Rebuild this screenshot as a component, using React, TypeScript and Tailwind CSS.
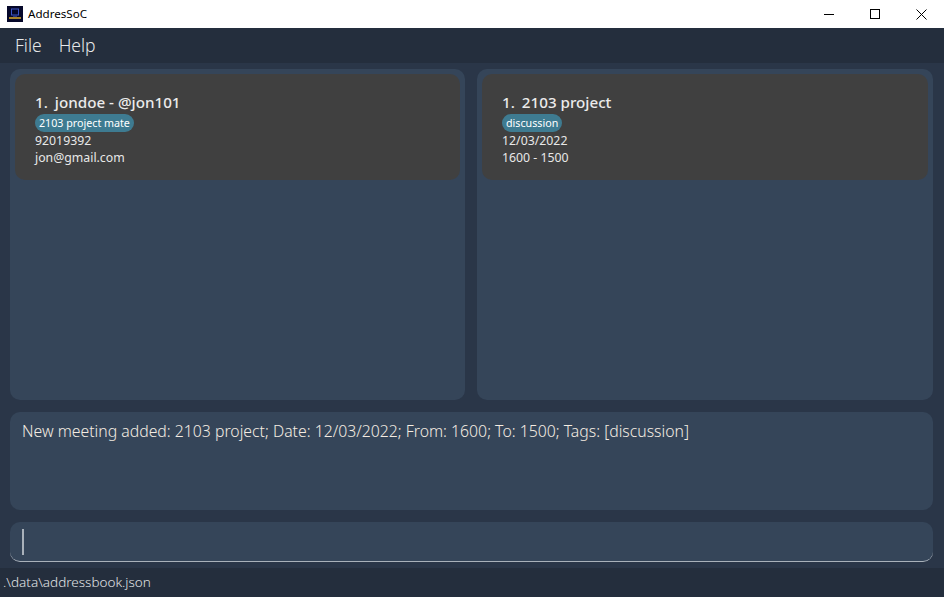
const FONT = "font-['Noto_Sans','Open_Sans',sans-serif]";

function AppIcon() {
  return (
    <svg width="16" height="16" viewBox="0 0 16 16" className="shrink-0">
      <rect width="16" height="16" fill="#06082a" />
      <rect x="4.5" y="3" width="7" height="6" fill="none" stroke="#3a55c8" strokeWidth="1" />
      <rect x="6" y="9" width="4" height="2" fill="#27357f" />
      <rect x="2" y="11" width="12" height="2" fill="#a8842c" />
    </svg>
  );
}

function WindowButtons() {
  return (
    <div className="flex h-full items-center">
      <div className="flex w-[46px] justify-center">
        <div className="h-px w-[10px] bg-black" />
      </div>
      <div className="flex w-[46px] justify-center">
        <div className="h-[10px] w-[10px] border border-black" />
      </div>
      <div className="flex w-[46px] justify-center">
        <svg width="11" height="11" viewBox="0 0 11 11">
          <path d="M0.5 0.5 L10.5 10.5 M10.5 0.5 L0.5 10.5" stroke="#000" strokeWidth="1" fill="none" />
        </svg>
      </div>
    </div>
  );
}

function Card({ title, tag, lines }: { title: string; tag: string; lines: string[] }) {
  return (
    <div className="h-[106px] rounded-[10px] bg-[#404040] pl-[20px] pt-[17px]">
      <div className="h-[22px] text-[15.2px] leading-[22px] font-medium text-[#ebebeb]">
        <span className="mr-[7px]">1.</span>
        {title}
      </div>
      <div className="mt-[1px] flex">
        <span className="h-[18px] rounded-[9px] bg-[#3e7b91] px-[4px] text-[10.7px] leading-[18px] text-white">{tag}</span>
      </div>
      {lines.map((line) => (
        <div key={line} className="h-[17px] text-[12.3px] leading-[17px] text-[#e8e8e8]">
          {line}
        </div>
      ))}
    </div>
  );
}

export default function App() {
  return (
    <div className={`flex h-[597px] w-[944px] flex-col overflow-hidden bg-[#2a3648] ${FONT}`}>
      {/* Title bar */}
      <header className="flex h-[28px] shrink-0 items-center justify-between bg-white pl-[7px]">
        <div className="flex items-center gap-[5px]">
          <AppIcon />
          <span className="text-[11.6px] text-black">AddresSoC</span>
        </div>
        <WindowButtons />
      </header>

      {/* Menu */}
      <nav className="flex h-[35px] shrink-0 items-center gap-[17px] bg-[#242e3d] pl-[15px] text-[17.5px] font-light text-[#e6e8ea]">
        <span>File</span>
        <span>Help</span>
      </nav>

      {/* Lists */}
      <main className="flex min-h-0 flex-1 flex-col pl-[10px] pr-[11px] pt-[6px]">
        <div className="flex h-[331px] shrink-0 gap-[12px]">
          <section className="w-[455px] rounded-[10px] bg-[#354559] p-[5px]">
            <Card title="jondoe - @jon101" tag="2103 project mate" lines={["92019392", "jon@gmail.com"]} />
          </section>
          <section className="flex-1 rounded-[10px] bg-[#354559] p-[5px]">
            <Card title="2103 project" tag="discussion" lines={["12/03/2022", "1600 - 1500"]} />
          </section>
        </div>

        <div className="mt-[12px] h-[98px] shrink-0 rounded-[10px] bg-[#354559] pl-[12px] pt-[7px] text-[15.8px] leading-[24px] font-light text-[#f4ece2]">
          New meeting added: 2103 project; Date: 12/03/2022; From: 1600; To: 1500; Tags: [discussion]
        </div>

        <div className="mt-[12px] flex h-[40px] shrink-0 items-center rounded-[10px] border-b border-b-[#a9b1ba] bg-[#354559] pl-[12px]">
          <div className="h-[26px] w-[2px] bg-[#a9b1ba]" />
        </div>
      </main>

      {/* Status bar */}
      <footer className="flex h-[29px] shrink-0 items-center bg-[#242e3d] pl-[3px] text-[13.5px] font-light text-[#e0e3e6]">
        .\data\addressbook.json
      </footer>
    </div>
  );
}
